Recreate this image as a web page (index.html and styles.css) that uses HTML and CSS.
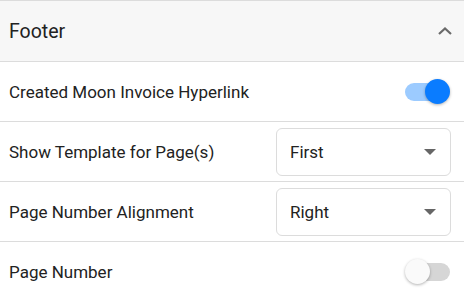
FILE: index.html
```html
<!DOCTYPE html>
<html lang="en">
<head>
    <meta charset="UTF-8">
    <meta name="viewport" content="width=device-width, initial-scale=1.0">
    <title>Footer Settings</title>
    <link rel="stylesheet" href="styles.css">
</head>
<body>
    <div class="panel">
        <div class="panel-header">
            <span class="panel-title">Footer</span>
            <svg class="chevron" width="16" height="10" viewBox="0 0 16 10">
                <path d="M2 8 L8 2.5 L14 8" fill="none" stroke="#6a6a6a" stroke-width="2.2"/>
            </svg>
        </div>
        <div class="row">
            <span class="label">Created Moon Invoice Hyperlink</span>
            <div class="toggle on"><div class="knob"></div></div>
        </div>
        <div class="row">
            <span class="label">Show Template for Page(s)</span>
            <div class="select">
                <span>First</span>
                <span class="caret"></span>
            </div>
        </div>
        <div class="row">
            <span class="label">Page Number Alignment</span>
            <div class="select">
                <span>Right</span>
                <span class="caret"></span>
            </div>
        </div>
        <div class="row">
            <span class="label">Page Number</span>
            <div class="toggle"><div class="knob"></div></div>
        </div>
    </div>
</body>
</html>
```

FILE: styles.css
```css
body {
    margin: 0;
    font-family: Roboto, "Liberation Sans", sans-serif;
    color: #222;
    background-color: #fff;
}
.panel {
    border-top: 1px solid #dcdcdc;
}
.panel-header {
    height: 60px;
    background-color: #f7f7f7;
    border-bottom: 1px solid #dcdcdc;
    display: flex;
    align-items: center;
    justify-content: space-between;
    padding: 0 11px 0 9px;
}
.panel-title {
    font-size: 19.5px;
}
.row {
    box-sizing: border-box;
    height: 60px;
    border-bottom: 1px solid #dcdcdc;
    display: flex;
    align-items: center;
    justify-content: space-between;
    padding: 0 14px 0 9px;
}
.label {
    font-size: 17px;
}
.select {
    box-sizing: border-box;
    width: 175px;
    height: 48px;
    border: 1px solid #dcdcdc;
    border-radius: 6px;
    display: flex;
    align-items: center;
    justify-content: space-between;
    padding: 0 14px 0 13px;
    font-size: 17px;
    margin-right: -1px;
}
.caret {
    width: 0;
    height: 0;
    border-left: 6.5px solid transparent;
    border-right: 6.5px solid transparent;
    border-top: 6px solid #666;
}
.toggle {
    width: 44px;
    height: 18px;
    border-radius: 9px;
    background-color: #d6d6d6;
    display: flex;
    align-items: center;
}
.toggle .knob {
    width: 25px;
    height: 25px;
    border-radius: 50%;
    background-color: #fafafa;
    box-shadow: 0 1px 3px rgba(0, 0, 0, 0.3);
    margin-left: -1px;
}
.toggle.on {
    width: 38px;
    margin-right: 7px;
    background-color: #9ccbff;
    justify-content: flex-end;
}
.toggle.on .knob {
    background-color: #0a7cff;
    margin-left: 0;
    margin-right: -7px;
}
```
